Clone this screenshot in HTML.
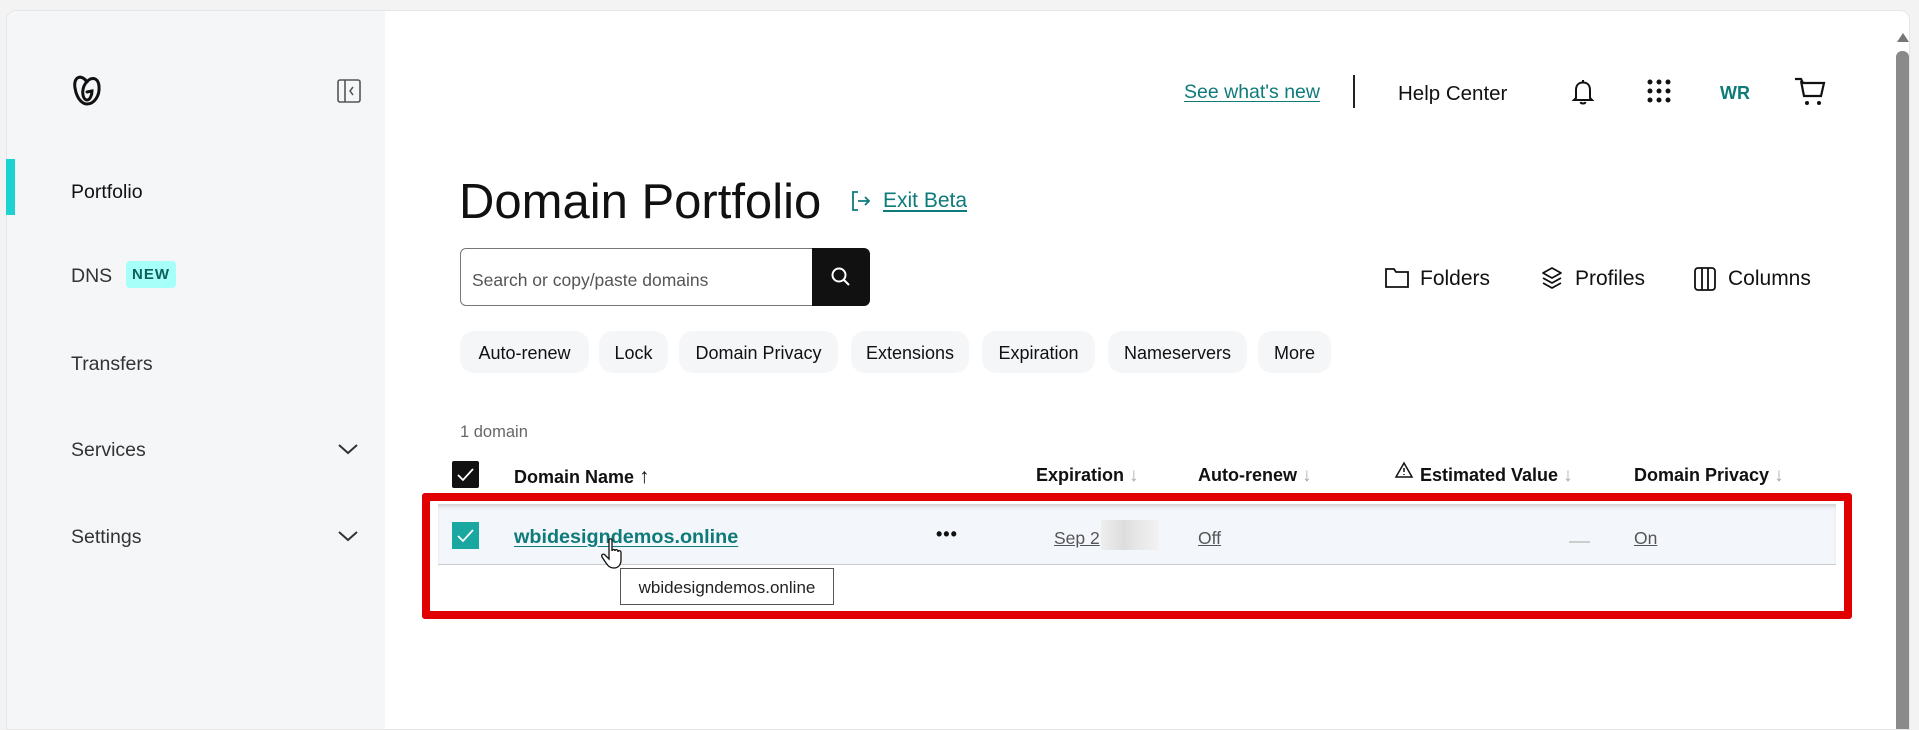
<!DOCTYPE html>
<html><head><meta charset="utf-8">
<style>
*{box-sizing:border-box;margin:0;padding:0}
body{width:1919px;height:721px;background:#f3f3f3;font-family:"Liberation Sans",sans-serif;color:#111;position:relative;overflow:hidden}
.card{position:absolute;left:6px;top:10px;width:1904px;height:720px;background:#fff;border-radius:10px 10px 0 0;overflow:hidden;border:1px solid #e6e6e6}
.side{position:absolute;left:0;top:0;width:378px;height:100%;background:#f5f6f8}
.abs{position:absolute;white-space:nowrap}
.nav{font-size:19.5px;color:#111}
.teal{color:#0f7a7a}
.chip{position:absolute;top:331px;height:42px;background:#f5f6f8;border-radius:14px;font-size:18px;line-height:44px;text-align:center}
.th{font-size:18px;font-weight:bold;color:#111;top:465px}
.arrow{color:#aaa;font-size:19px;font-weight:normal}
svg{position:absolute}
</style></head><body>
<div class="card">
 <div class="side"></div>
 <div class="abs" style="left:1889px;top:40px;width:13px;height:690px;background:#8a8a8a;border-radius:6px"></div>
 <div class="abs" style="left:1890px;top:22px;width:0;height:0;border-left:6px solid transparent;border-right:6px solid transparent;border-bottom:9px solid #777"></div>
</div>
<svg style="left:72px;top:74px" width="30" height="32" viewBox="0 0 30 32"><path d="M15 8 C10 0 1 2 3 14 C5 26 11 30 15 30 C22 30 28 22 27 12 C26 2 17 2 12 12 C9 20 12 26 15 26 C18 26 20 21 20 17 L15 18" fill="none" stroke="#111" stroke-width="3" stroke-linecap="round"/></svg>
<svg style="left:337px;top:79px" width="24" height="24" viewBox="0 0 24 24"><rect x="1" y="1" width="22" height="22" rx="2" fill="none" stroke="#555" stroke-width="1.6"/><line x1="8" y1="1" x2="8" y2="23" stroke="#555" stroke-width="1.6"/><path d="M16 8 L13 12 L16 16" fill="none" stroke="#555" stroke-width="1.5"/></svg>
<div class="abs" style="left:6px;top:159px;width:9px;height:56px;background:#1ed2d2"></div>
<div class="abs nav" style="left:71px;top:181px">Portfolio</div>
<div class="abs nav" style="left:71px;top:265px;color:#333">DNS</div>
<div class="abs" style="left:126px;top:261px;width:50px;height:27px;background:#a6fff8;border-radius:4px;font-size:15px;font-weight:bold;color:#0f5f5f;text-align:center;line-height:28px;letter-spacing:1px">NEW</div>
<div class="abs nav" style="left:71px;top:353px;color:#333">Transfers</div>
<div class="abs nav" style="left:71px;top:439px;color:#333">Services</div>
<div class="abs nav" style="left:71px;top:526px;color:#333">Settings</div>
<svg style="left:337px;top:442px" width="22" height="14" viewBox="0 0 22 14"><path d="M2 3 L11 11 L20 3" fill="none" stroke="#333" stroke-width="2"/></svg>
<svg style="left:337px;top:529px" width="22" height="14" viewBox="0 0 22 14"><path d="M2 3 L11 11 L20 3" fill="none" stroke="#333" stroke-width="2"/></svg>

<div class="abs teal" style="left:1184px;top:81px;font-size:19.5px;text-decoration:underline;text-underline-offset:3px">See what's new</div>
<div class="abs" style="left:1353px;top:75px;width:2px;height:33px;background:#222"></div>
<div class="abs" style="left:1398px;top:82px;font-size:20.5px">Help Center</div>
<svg style="left:1571px;top:78px" width="24" height="28" viewBox="0 0 24 28"><path d="M12 2 V4 M5 20 V12 C5 7 8 4.5 12 4.5 C16 4.5 19 7 19 12 V20 L21 22 H3 L5 20 Z M9.5 24 C10 26 14 26 14.5 24" fill="none" stroke="#111" stroke-width="2"/></svg>
<svg style="left:1646px;top:78px" width="26" height="26" viewBox="0 0 26 26" fill="#111"><circle cx="4" cy="4" r="2.5"/><circle cx="13" cy="4" r="2.5"/><circle cx="22" cy="4" r="2.5"/><circle cx="4" cy="13" r="2.5"/><circle cx="13" cy="13" r="2.5"/><circle cx="22" cy="13" r="2.5"/><circle cx="4" cy="22" r="2.5"/><circle cx="13" cy="22" r="2.5"/><circle cx="22" cy="22" r="2.5"/></svg>
<div class="abs teal" style="left:1720px;top:83px;font-size:18px;font-weight:bold">WR</div>
<svg style="left:1794px;top:76px" width="32" height="30" viewBox="0 0 32 30"><path d="M1 3 H7 L9 7 H30 L27 20 H10 L7 5" fill="none" stroke="#111" stroke-width="2.2"/><circle cx="13" cy="27" r="2" fill="#111"/><circle cx="25" cy="27" r="2" fill="#111"/></svg>

<div class="abs" style="left:459px;top:174px;font-size:49px;color:#111">Domain Portfolio</div>
<svg style="left:850px;top:190px" width="22" height="22" viewBox="0 0 22 22"><path d="M8 2 H3 V20 H8 M8 11 H19 M15 7 L19 11 L15 15" fill="none" stroke="#0f7a7a" stroke-width="1.8"/></svg>
<div class="abs teal" style="left:883px;top:189px;font-size:21px;text-decoration:underline;text-underline-offset:3px">Exit Beta</div>

<div class="abs" style="left:460px;top:248px;width:356px;height:58px;border:1.5px solid #777;border-radius:6px 0 0 6px"></div>
<div class="abs" style="left:472px;top:270px;font-size:17.5px;color:#555">Search or copy/paste domains</div>
<div class="abs" style="left:812px;top:248px;width:58px;height:58px;background:#111;border-radius:0 6px 6px 0"></div>
<svg style="left:829px;top:265px" width="24" height="24" viewBox="0 0 24 24"><circle cx="10" cy="10" r="6.5" fill="none" stroke="#fff" stroke-width="2"/><path d="M15 15 L20 20" stroke="#fff" stroke-width="2"/></svg>

<svg style="left:1384px;top:267px" width="26" height="22" viewBox="0 0 26 22"><path d="M2 2 H10 L12 5 H24 V20 H2 Z" fill="none" stroke="#111" stroke-width="1.8"/></svg>
<div class="abs" style="left:1420px;top:267px;font-size:21px">Folders</div>
<svg style="left:1540px;top:266px" width="24" height="26" viewBox="0 0 24 26"><path d="M12 2 L21 7 L12 12 L3 7 Z M3 12 L12 17 L21 12 M3 17 L12 22 L21 17" fill="none" stroke="#111" stroke-width="1.8" stroke-linejoin="round"/></svg>
<div class="abs" style="left:1575px;top:267px;font-size:21px">Profiles</div>
<svg style="left:1693px;top:266px" width="24" height="26" viewBox="0 0 24 26"><rect x="2" y="2" width="20" height="22" rx="3" fill="none" stroke="#111" stroke-width="1.8"/><path d="M9 2 V24 M15 2 V24" stroke="#111" stroke-width="1.8"/></svg>
<div class="abs" style="left:1728px;top:267px;font-size:21px">Columns</div>

<div class="chip" style="left:460px;width:129px">Auto-renew</div>
<div class="chip" style="left:599px;width:69px">Lock</div>
<div class="chip" style="left:679px;width:159px">Domain Privacy</div>
<div class="chip" style="left:851px;width:118px">Extensions</div>
<div class="chip" style="left:982px;width:113px">Expiration</div>
<div class="chip" style="left:1108px;width:139px">Nameservers</div>
<div class="chip" style="left:1258px;width:73px">More</div>

<div class="abs" style="left:460px;top:423px;font-size:16.5px;color:#666">1 domain</div>

<div class="abs" style="left:452px;top:461px;width:27px;height:27px;background:#111;border-radius:2px"></div>
<svg style="left:452px;top:461px" width="27" height="27" viewBox="0 0 27 27"><path d="M6 14 L11 19 L21 8" fill="none" stroke="#fff" stroke-width="1.8"/></svg>
<div class="abs th" style="left:514px">Domain Name <span style="font-weight:normal;font-size:21px;color:#111">↑</span></div>
<div class="abs th" style="left:1036px">Expiration <span class="arrow">↓</span></div>
<div class="abs th" style="left:1198px">Auto-renew <span class="arrow">↓</span></div>
<svg style="left:1394px;top:461px" width="20" height="18" viewBox="0 0 20 18"><path d="M10 2 L18 16 H2 Z M10 7 V11 M10 13 V14" fill="none" stroke="#111" stroke-width="1.5"/></svg>
<div class="abs th" style="left:1420px">Estimated Value <span class="arrow">↓</span></div>
<div class="abs th" style="left:1634px">Domain Privacy <span class="arrow">↓</span></div>

<div class="abs" style="left:438px;top:504px;width:1398px;height:61px;background:#f3f6fa;border-bottom:1.5px solid #ccc;box-shadow:inset 0 4px 4px -2px #ccc"></div>
<div class="abs" style="left:422px;top:493px;width:1430px;height:126px;border:8px solid #e00000;border-radius:3px"></div>
<div class="abs" style="left:452px;top:522px;width:27px;height:27px;background:#1aa7a0"></div>
<svg style="left:452px;top:522px" width="27" height="27" viewBox="0 0 27 27"><path d="M6 14 L11 19 L21 8" fill="none" stroke="#fff" stroke-width="1.8"/></svg>
<div class="abs teal" style="left:514px;top:526px;font-size:19.8px;font-weight:bold;text-decoration:underline;text-underline-offset:3px">wbidesigndemos.online</div>
<div class="abs" style="left:936px;top:524px;font-size:18px;font-weight:bold;letter-spacing:1px">•••</div>
<div class="abs" style="left:1054px;top:528px;font-size:17.5px;color:#555;text-decoration:underline">Sep 2</div>
<div class="abs" style="left:1101px;top:520px;width:58px;height:30px;background:linear-gradient(90deg,#eee,#ddd 40%,#e6e6e6 60%,#f2f2f2)"></div>
<div class="abs" style="left:1198px;top:528px;font-size:17.5px;color:#555;text-decoration:underline">Off</div>
<div class="abs" style="left:1569px;top:541px;width:21px;height:2px;background:#ccc"></div>
<div class="abs" style="left:1634px;top:528px;font-size:17.5px;color:#555;text-decoration:underline">On</div>
<div class="abs" style="left:620px;top:568px;width:214px;height:37px;background:#fff;border:1px solid #555;font-size:17px;line-height:37px;text-align:center;color:#222">wbidesigndemos.online</div>
<svg style="left:600px;top:538px" width="28" height="32" viewBox="0 0 28 32"><path d="M9 2 C9 0.5 12 0.5 12 2 V13 C12 11 15 11 15 13 C15 11 18 11 18 14 C18 12 21 12 21 15 V22 C21 27 18 30 14 30 C10 30 8 28 6 25 L2 19 C1 17 3 15 5 17 L9 21 Z" fill="#fff" stroke="#111" stroke-width="1.3"/></svg>
</body></html>
